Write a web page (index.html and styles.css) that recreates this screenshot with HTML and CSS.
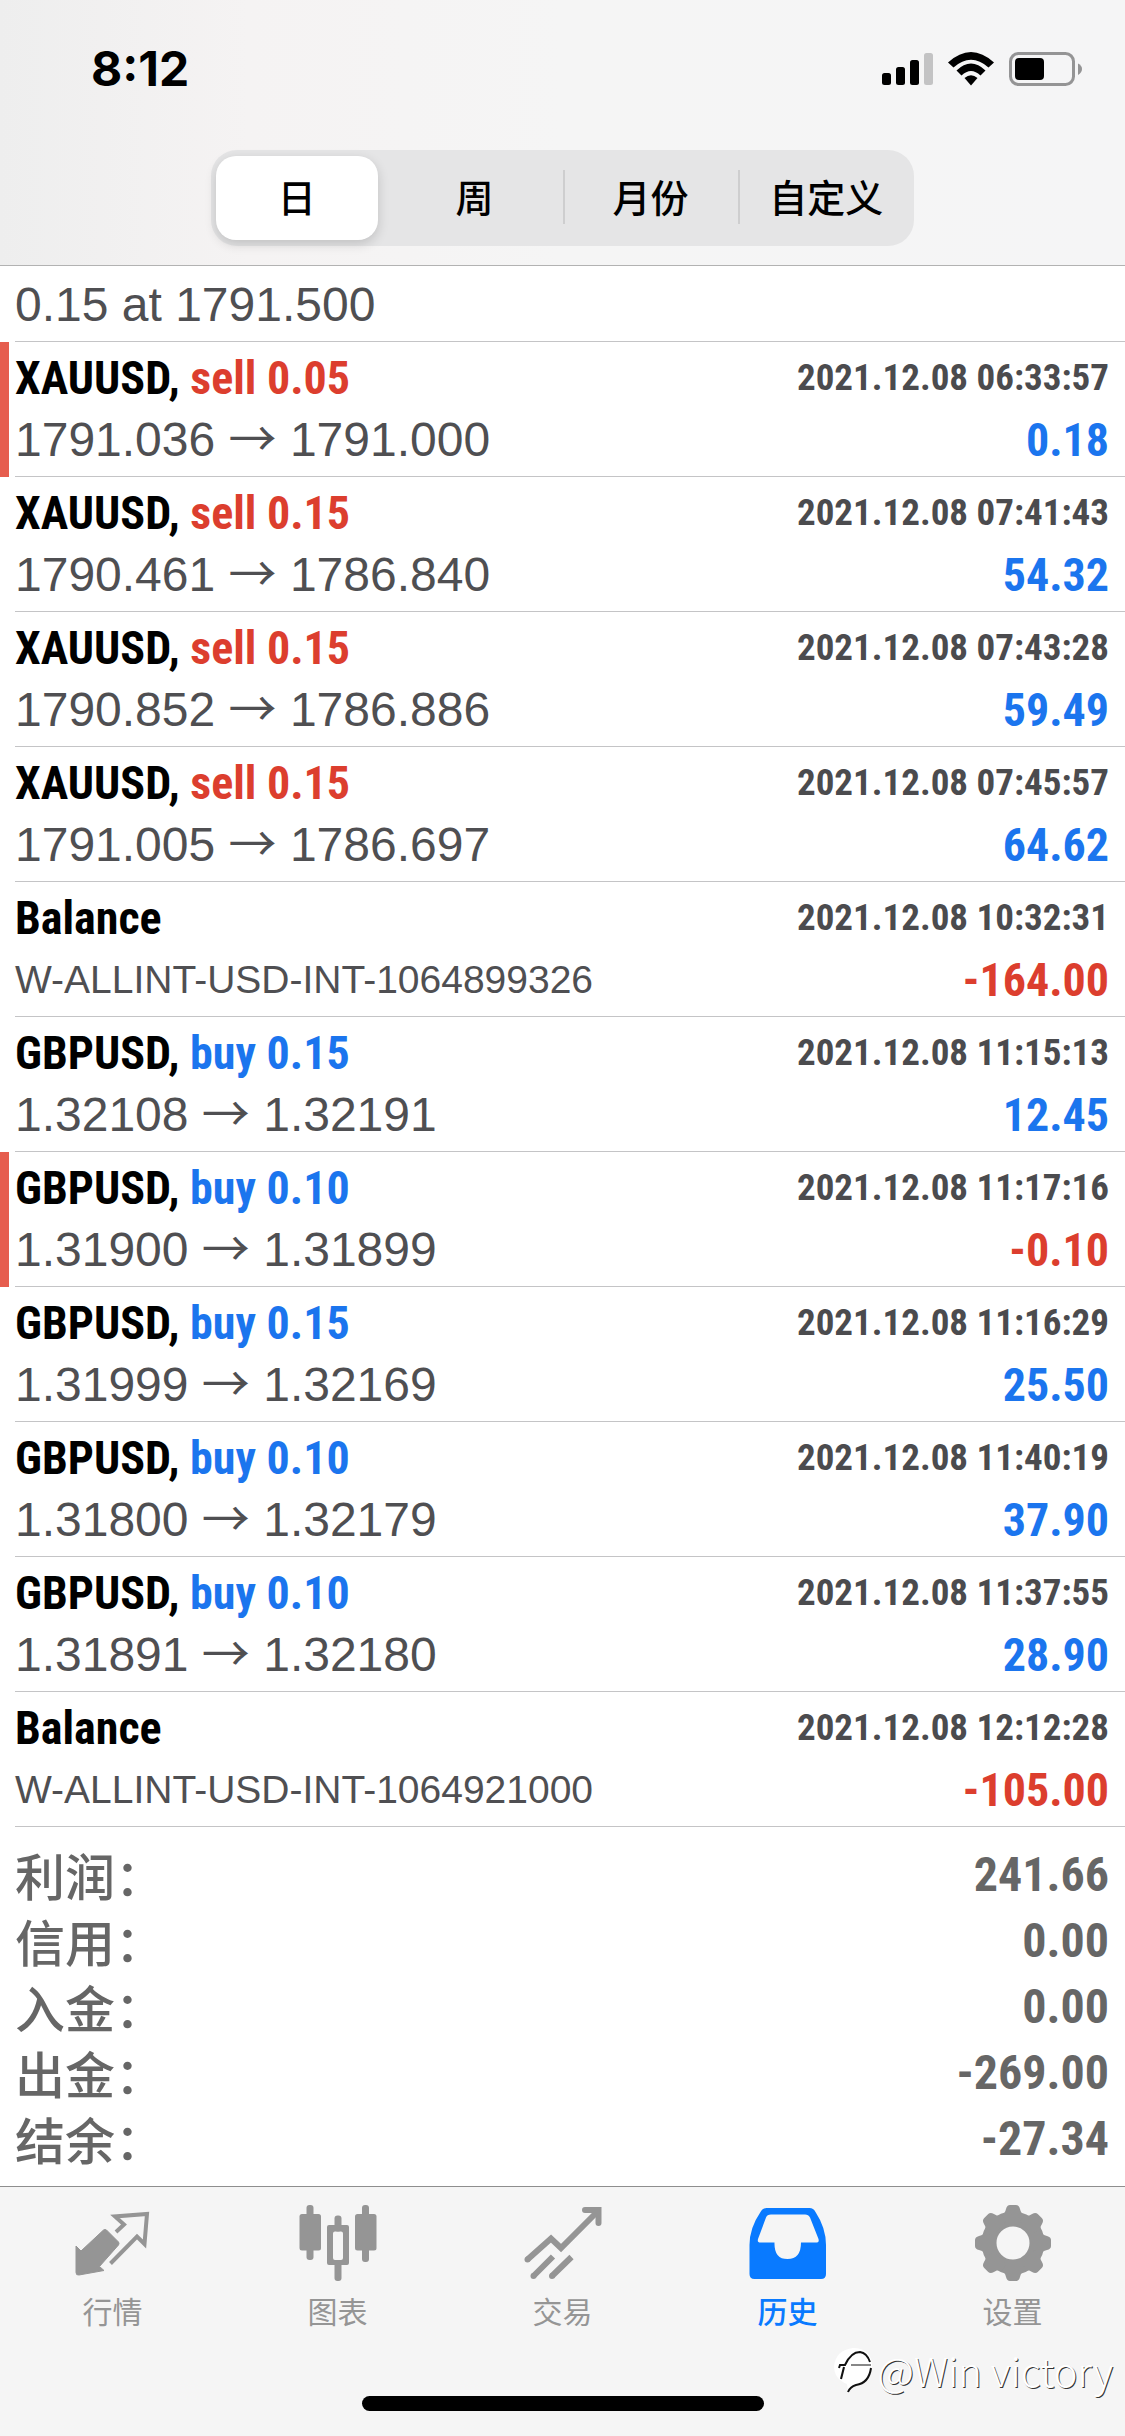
FILE: index.html
```html
<!DOCTYPE html>
<html lang="zh-CN">
<head>
<meta charset="utf-8">
<meta name="viewport" content="width=device-width">
<title>历史</title>
<link rel="stylesheet" href="styles.css">
</head>
<body>
<header class="top">
  <div class="status">
    <time class="clock">8:12</time>
    <svg class="status-icons" width="204" height="36" viewBox="0 0 204 36" role="img" aria-label="信号、无线网络、电池">
      <rect x="2" y="22" width="9" height="12" rx="2.5"/>
      <rect x="16" y="16" width="9" height="18" rx="2.5"/>
      <rect x="30" y="9" width="9" height="25" rx="2.5"/>
      <rect x="44" y="2" width="9" height="32" rx="2.5" fill="#c3c3c4"/>
      <path d="M68 11.500Q91-9.500 114 11.500L108.500 16.500Q91 1 73.500 16.500Z"/>
      <path d="M76.500 19.500Q91 5.500 105.500 19.500L100.500 24.500Q91 15.500 81.500 24.500Z"/>
      <path d="M84.500 27Q91 21.500 97.500 27L91 34.500Z"/>
      <rect x="130.500" y="2.500" width="63" height="31" rx="8" fill="none" stroke="#949495" stroke-width="3"/>
      <rect x="135" y="7" width="29" height="22" rx="4"/>
      <path d="M198 12.500Q202 14.500 202 18T198 24Z" fill="#949495"/>
    </svg>
  </div>
  <div class="segments" role="tablist">
    <button class="segment selected" type="button" role="tab" aria-selected="true">日</button>
    <button class="segment" type="button" role="tab">周</button>
    <button class="segment divided" type="button" role="tab">月份</button>
    <button class="segment divided" type="button" role="tab">自定义</button>
  </div>
</header>

<main>
  <ul class="deals">
    <li class="deal"><div class="deal-body partial"><span class="price">0.15 at 1791.500</span></div></li>
    <li class="deal flagged"><div class="deal-body"><span class="title">XAUUSD, <span class="sell">sell 0.05</span></span><time class="date">2021.12.08 06:33:57</time><span class="price">1791.036 <span class="arrow">→</span> 1791.000</span><span class="amount plus">0.18</span></div></li>
    <li class="deal"><div class="deal-body"><span class="title">XAUUSD, <span class="sell">sell 0.15</span></span><time class="date">2021.12.08 07:41:43</time><span class="price">1790.461 <span class="arrow">→</span> 1786.840</span><span class="amount plus">54.32</span></div></li>
    <li class="deal"><div class="deal-body"><span class="title">XAUUSD, <span class="sell">sell 0.15</span></span><time class="date">2021.12.08 07:43:28</time><span class="price">1790.852 <span class="arrow">→</span> 1786.886</span><span class="amount plus">59.49</span></div></li>
    <li class="deal"><div class="deal-body"><span class="title">XAUUSD, <span class="sell">sell 0.15</span></span><time class="date">2021.12.08 07:45:57</time><span class="price">1791.005 <span class="arrow">→</span> 1786.697</span><span class="amount plus">64.62</span></div></li>
    <li class="deal"><div class="deal-body"><span class="title">Balance</span><time class="date">2021.12.08 10:32:31</time><span class="comment">W-ALLINT-USD-INT-1064899326</span><span class="amount minus">-164.00</span></div></li>
    <li class="deal"><div class="deal-body"><span class="title">GBPUSD, <span class="buy">buy 0.15</span></span><time class="date">2021.12.08 11:15:13</time><span class="price">1.32108 <span class="arrow">→</span> 1.32191</span><span class="amount plus">12.45</span></div></li>
    <li class="deal flagged"><div class="deal-body"><span class="title">GBPUSD, <span class="buy">buy 0.10</span></span><time class="date">2021.12.08 11:17:16</time><span class="price">1.31900 <span class="arrow">→</span> 1.31899</span><span class="amount minus">-0.10</span></div></li>
    <li class="deal"><div class="deal-body"><span class="title">GBPUSD, <span class="buy">buy 0.15</span></span><time class="date">2021.12.08 11:16:29</time><span class="price">1.31999 <span class="arrow">→</span> 1.32169</span><span class="amount plus">25.50</span></div></li>
    <li class="deal"><div class="deal-body"><span class="title">GBPUSD, <span class="buy">buy 0.10</span></span><time class="date">2021.12.08 11:40:19</time><span class="price">1.31800 <span class="arrow">→</span> 1.32179</span><span class="amount plus">37.90</span></div></li>
    <li class="deal"><div class="deal-body"><span class="title">GBPUSD, <span class="buy">buy 0.10</span></span><time class="date">2021.12.08 11:37:55</time><span class="price">1.31891 <span class="arrow">→</span> 1.32180</span><span class="amount plus">28.90</span></div></li>
    <li class="deal"><div class="deal-body"><span class="title">Balance</span><time class="date">2021.12.08 12:12:28</time><span class="comment">W-ALLINT-USD-INT-1064921000</span><span class="amount minus">-105.00</span></div></li>
  </ul>

  <dl class="summary">
    <div class="total"><dt>利润：</dt><dd>241.66</dd></div>
    <div class="total"><dt>信用：</dt><dd>0.00</dd></div>
    <div class="total"><dt>入金：</dt><dd>0.00</dd></div>
    <div class="total"><dt>出金：</dt><dd>-269.00</dd></div>
    <div class="total"><dt>结余：</dt><dd>-27.34</dd></div>
  </dl>
</main>

<footer class="bottom">
  <nav class="tabs">
    <a class="tab" href="#quotes">
      <svg class="tab-icon" viewBox="0 0 80 80" aria-hidden="true">
        <path d="M3 43L8 48L30.500 27Q32 26 33.500 27L45.500 39Q46.500 40.500 45.500 42L26.500 63.500L31 67.500L6 72Q3 72.500 3 69.500Z" fill="currentColor" stroke="currentColor" stroke-linejoin="round"/>
        <path d="M43 29L51 21.500L42 13.500L74 11L71.500 41L64 33.500L37.500 60.500" fill="none" stroke="currentColor" stroke-width="4"/>
      </svg>
      <span>行情</span>
    </a>
    <a class="tab" href="#charts">
      <svg class="tab-icon" viewBox="0 0 80 80" aria-hidden="true" fill="currentColor">
        <rect x="1.500" y="11" width="21.500" height="36.500" rx="2.500"/>
        <rect x="8.500" y="2" width="7" height="55" rx="3"/>
        <rect x="57" y="11" width="21.500" height="36.500" rx="2.500"/>
        <rect x="64" y="2" width="7" height="57" rx="3"/>
        <rect x="36.500" y="12.500" width="7" height="16" rx="3"/>
        <rect x="36.500" y="57" width="7" height="21" rx="3"/>
        <path fill-rule="evenodd" d="M31 22H49Q51 22 51 24V60Q51 62 49 62H31Q29 62 29 60V24Q29 22 31 22ZM37 28.500Q35 28.500 35 30.500V55Q35 57 37 57H43Q45 57 45 55V30.500Q45 28.500 43 28.500Z"/>
      </svg>
      <span>图表</span>
    </a>
    <a class="tab" href="#trade">
      <svg class="tab-icon" viewBox="0 0 80 80" aria-hidden="true" fill="none" stroke="currentColor" stroke-width="6">
        <path d="M4.500 56.500L28 35.500L38 45L75 8" stroke-linejoin="miter"/>
        <path d="M62 7H75.500V20" stroke-linecap="round"/>
        <path d="M30 53.500L10.500 73M48.500 54L29 73"/>
        <g fill="currentColor" stroke="none"><circle cx="4.500" cy="56.500" r="3"/><circle cx="10.500" cy="73" r="3"/><circle cx="29" cy="73" r="3"/></g>
      </svg>
      <span>交易</span>
    </a>
    <a class="tab current" href="#history" aria-current="page">
      <svg class="tab-icon" viewBox="0 0 80 80" aria-hidden="true" fill="currentColor">
        <path d="M18.500 5H61.500Q65.500 5 67.500 9Q78 25 78 42V71Q78 76 73 76H6.500Q1.500 76 1.500 71V42Q1.500 25 12.500 9Q14.500 5 18.500 5Z"/>
        <path d="M23 11.500H57Q60.500 11.500 62 14.500L70.500 36Q71.500 39.500 68 39.500H53Q53 56 39.500 56T26.500 39.500H12.500Q9 39.500 10 36L18 14.500Q19 11.500 23 11.500Z" fill="#f5f5f5"/>
      </svg>
      <span>历史</span>
    </a>
    <a class="tab" href="#settings">
      <svg class="tab-icon" viewBox="0 0 80 80" aria-hidden="true" fill="currentColor">
        <defs><path id="tooth" d="M28 13Q32 11 33 6Q34 2 37 2H43Q46 2 47 6Q48 11 52 13L50 20H30Z"/></defs>
        <circle cx="40" cy="40" r="24" fill="none" stroke="currentColor" stroke-width="15"/>
        <use href="#tooth"/>
        <use href="#tooth" transform="rotate(45 40 40)"/>
        <use href="#tooth" transform="rotate(90 40 40)"/>
        <use href="#tooth" transform="rotate(135 40 40)"/>
        <use href="#tooth" transform="rotate(180 40 40)"/>
        <use href="#tooth" transform="rotate(225 40 40)"/>
        <use href="#tooth" transform="rotate(270 40 40)"/>
        <use href="#tooth" transform="rotate(315 40 40)"/>
      </svg>
      <span>设置</span>
    </a>
  </nav>
  <div class="home-bar"></div>
  <div class="watermark">
    <svg width="42" height="50" viewBox="0 0 42 50" aria-hidden="true">
      <path d="M20 3Q39 3 39 22Q38 38 22 40L15 47L14 39Q1 34 1 21Q3 5 20 3Z" fill="#fff"/>
      <g fill="none" stroke="#111"><path d="M6 23L7 20H12Q18 7 27 7Q34 8 37 17" stroke-width="2"/><path d="M18 20H38" stroke-width="1"/><path d="M11 22L8 34" stroke-width="2"/><path d="M38 23Q36 38 23 40Q17 42 15 47" stroke-width="2"/></g>
    </svg>
    <span>@Win victory</span>
  </div>
</footer>
</body>
</html>
```
FILE: styles.css
```css
* {
  box-sizing: border-box;
}

body {
  margin: 0;
  min-height: 100vh;
  display: flex;
  flex-direction: column;
  background: #fff;
  font-family: "Liberation Sans", "Noto Sans CJK SC", sans-serif;
}

/* Header */

.top {
  padding-bottom: 19px;
  background: linear-gradient(90deg, #eeeeee, #f5f3f3 22%, #f5f5f5 50%, #f5f5f6);
  border-bottom: 1px solid #b2b2b2;
}

.status {
  display: flex;
  justify-content: space-between;
  align-items: center;
  height: 138px;
  padding: 0 41px 0 91px;
}

.clock {
  font: 700 48px/60px Inter, sans-serif;
}

.segments {
  display: grid;
  grid-template-columns: repeat(4, 1fr);
  width: 62.5%;
  height: 96px;
  margin: 12px auto 0;
  padding: 6px 0;
  border-radius: 26px;
  background: #e5e5e6;
}

.segment {
  position: relative;
  padding: 0 0 4px;
  border: 0;
  border-radius: 20px;
  background: none;
  color: #000;
  font: 500 38px/56px "Noto Sans CJK SC", sans-serif;
}

.segment.selected {
  margin: 0 9px 0 5px;
  background: #fff;
  box-shadow: 0 4px 12px rgba(0, 0, 0, 0.16);
}

.segment.divided::before {
  content: "";
  position: absolute;
  left: 0;
  top: 14px;
  bottom: 16px;
  width: 2px;
  background: #cececf;
}

/* Deals */

.deals {
  margin: 0;
  padding: 0;
  list-style: none;
}

.deal {
  display: flex;
}

.deal::before {
  content: "";
  width: 9px;
  margin-right: 6px;
}

.deal.flagged::before {
  background: #e65d4e;
}

.deal-body {
  flex: 1;
  display: grid;
  grid-template-columns: 1fr auto;
  grid-template-rows: 64px 60px;
  align-items: center;
  padding: 4px 16px 6px 0;
  border-bottom: 1px solid #c4c4c6;
  white-space: nowrap;
}

.deal-body.partial {
  grid-template-rows: 60px;
  padding-top: 9px;
}

.title,
.date,
.amount {
  font-family: "Roboto Condensed", Roboto, sans-serif;
  font-weight: 700;
}

.title {
  font-size: 46px;
  line-height: 64px;
}

.date {
  color: #4b4b4e;
  font-size: 37px;
  line-height: 60px;
}

.amount {
  font-size: 46px;
  line-height: 60px;
  text-align: right;
}

.price {
  color: #4f4f52;
  font-size: 48px;
  line-height: 60px;
}

.arrow {
  font-family: "Noto Sans CJK SC", sans-serif;
  line-height: 1;
}

.comment {
  color: #4f4f52;
  font-size: 39px;
  line-height: 60px;
}

.buy,
.plus {
  color: #1b75ee;
}

.sell,
.minus {
  color: #dc3e2e;
}

/* Totals */

.summary {
  margin: 0;
  padding: 15px 16px 14px 15px;
  color: #666;
}

.total {
  display: flex;
  justify-content: space-between;
  align-items: center;
  height: 66px;
}

.total dt {
  padding-bottom: 2px;
  font: 500 50px/50px "Noto Sans CJK SC", sans-serif;
}

.total dd {
  margin: 0;
  font: 700 48px/66px "Roboto Condensed", Roboto, sans-serif;
}

/* Tab bar */

.bottom {
  position: relative;
  flex: 1;
  padding-bottom: 24px;
  background: #f5f5f5;
  border-top: 1px solid #8e8e8e;
}

.tabs {
  display: flex;
  padding-top: 16px;
}

.tab {
  flex: 1;
  display: flex;
  flex-direction: column;
  align-items: center;
  gap: 7px;
  color: #959595;
  font: 400 30px/40px "Noto Sans CJK SC", sans-serif;
  text-decoration: none;
}

.tab.current {
  color: #097aff;
  font-weight: 500;
}

.tab-icon {
  width: 80px;
  height: 80px;
}

.home-bar {
  width: 402px;
  height: 15px;
  margin: 66px auto 0;
  border-radius: 8px;
  background: #000;
}

.watermark {
  position: absolute;
  right: 12px;
  bottom: 36px;
  display: flex;
  align-items: center;
  color: #fff;
  font: 300 40px/60px "Noto Sans CJK SC", sans-serif;
  text-shadow: 1px 1px 0 #333;
}

.watermark svg {
  margin-right: 2px;
}
```
